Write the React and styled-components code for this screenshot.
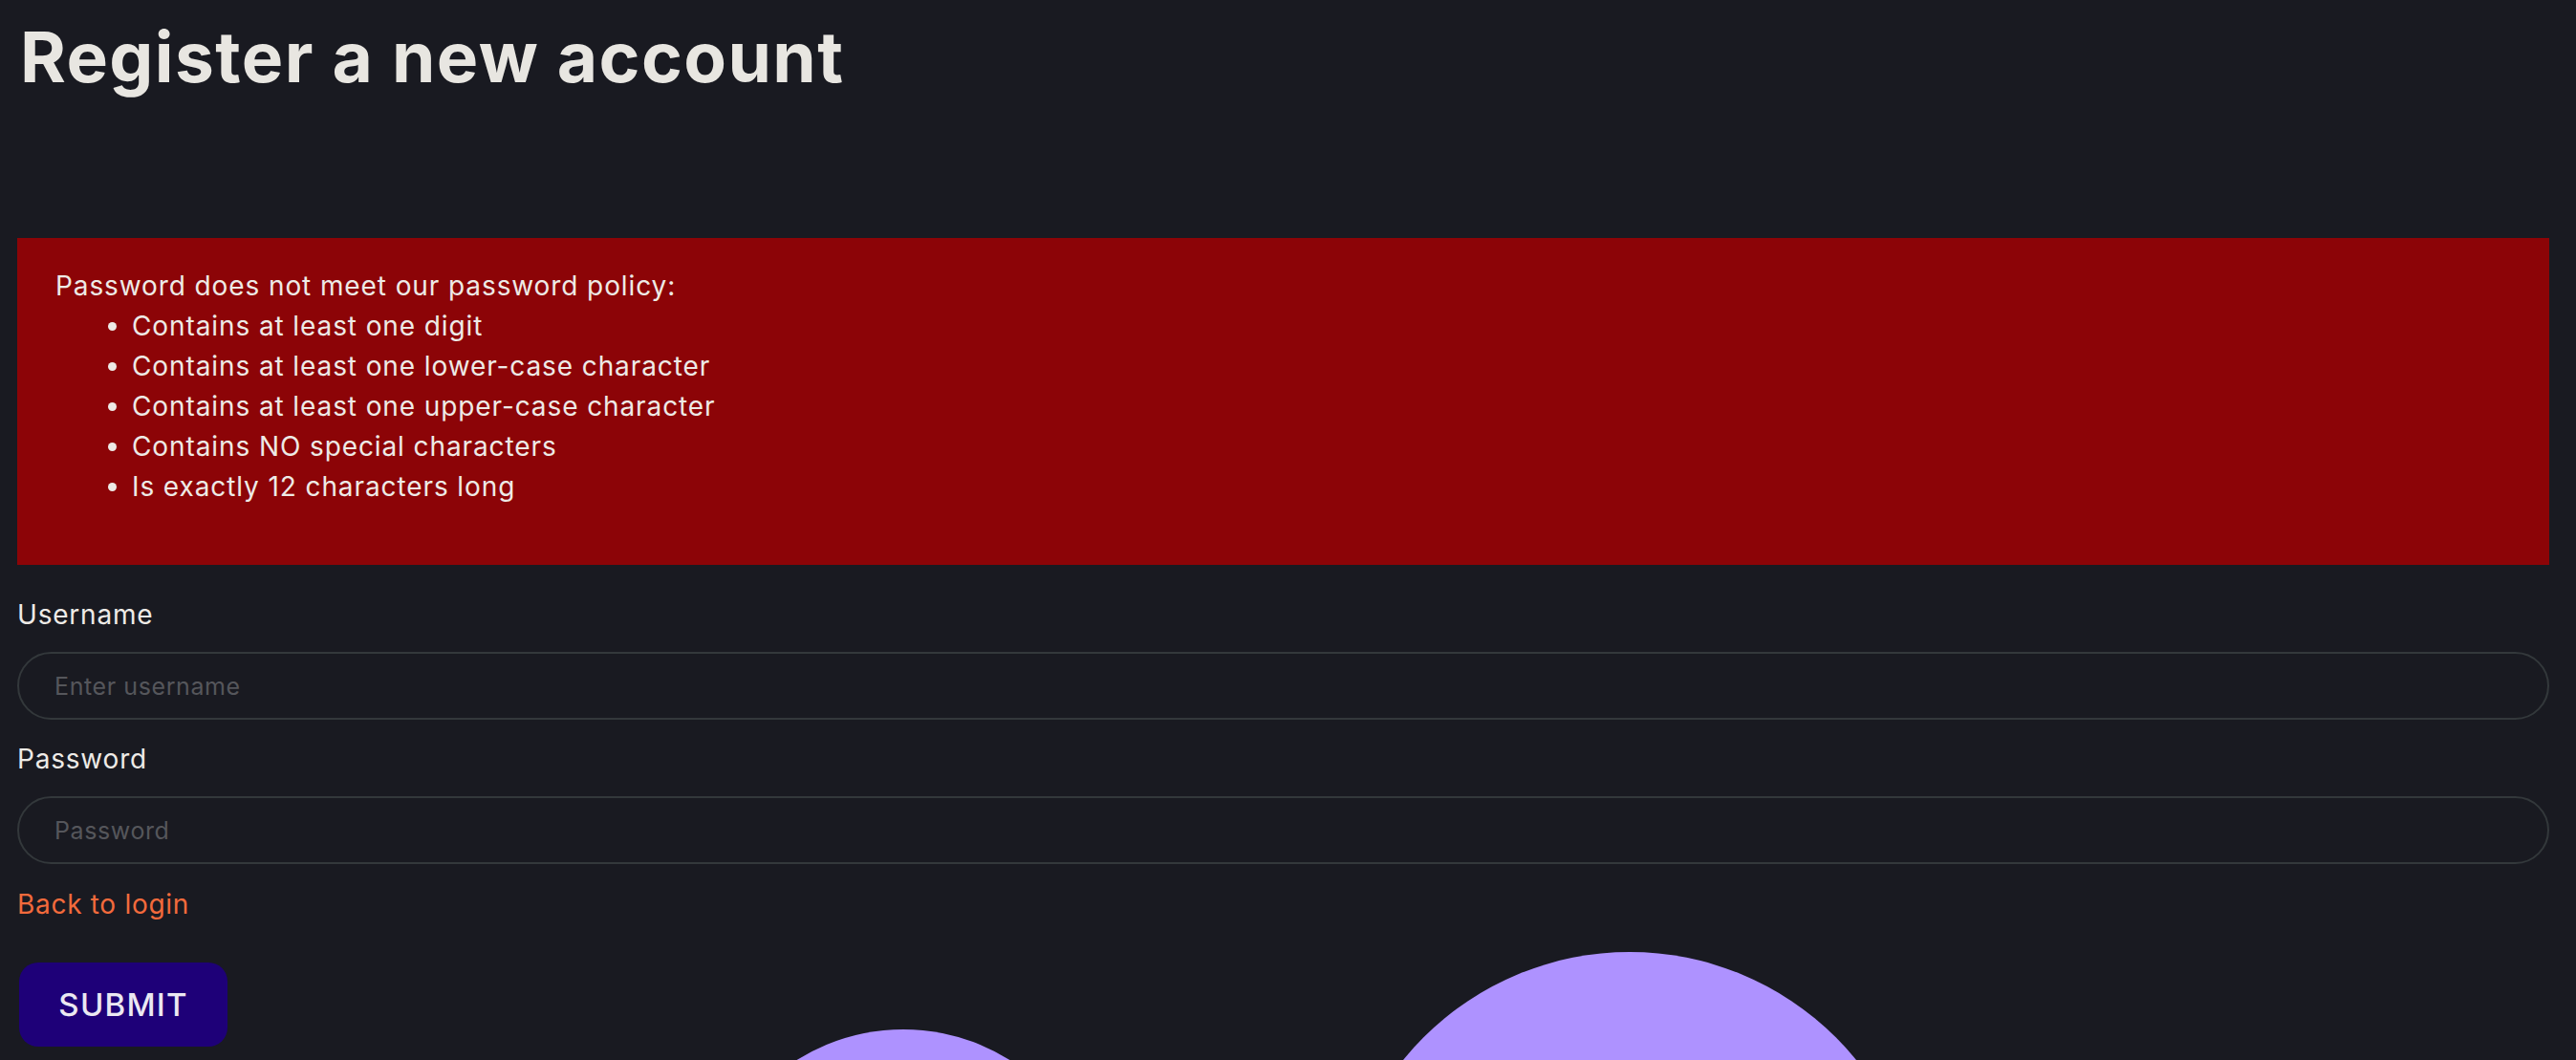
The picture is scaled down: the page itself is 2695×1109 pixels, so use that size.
import styled, { createGlobalStyle } from 'styled-components';

const GlobalStyle = createGlobalStyle`
  html, body {
    margin: 0;
    padding: 0;
    background: #191a21;
  }
  body {
    font-family: 'Inter', 'Noto Sans', sans-serif;
    color: #eeebe7;
    overflow: hidden;
  }
  * {
    box-sizing: border-box;
  }
`;

const Page = styled.div`
  position: relative;
  min-height: 1109px;
  overflow: hidden;
  padding: 0 28px 0 18px;
`;

const Content = styled.main`
  position: relative;
  z-index: 1;
  display: flex;
  flex-direction: column;
`;

const Title = styled.h1`
  margin: 16px 0 0 3px;
  height: 88px;
  font-size: 73px;
  line-height: 88px;
  font-weight: 700;
  letter-spacing: 1.4px;
  color: #e8e6e1;
`;

const Alert = styled.div`
  margin-top: 145px;
  background: #8c0407;
  padding: 29px 40px 61px;
  font-size: 28px;
  line-height: 42px;
  letter-spacing: 0.9px;
  color: #eeeae6;

  p {
    margin: 0;
  }
  ul {
    margin: 0;
    padding-left: 80px;
  }
`;

const Form = styled.form`
  display: flex;
  flex-direction: column;
  margin-top: 31px;
`;

const Label = styled.label`
  font-size: 28px;
  line-height: 42px;
  letter-spacing: 0.8px;
  color: #eeebe7;
  margin-top: ${(p) => p.$top || 0}px;
`;

const Input = styled.input`
  margin-top: 18px;
  height: 71px;
  width: 100%;
  border: 2px solid #33383b;
  border-radius: 36px;
  background: transparent;
  padding: 0 37px;
  font-family: 'Inter', 'Noto Sans', sans-serif;
  font-size: 25px;
  letter-spacing: 0.6px;
  color: #eeebe7;
  outline: none;

  &::placeholder {
    color: #55565b;
  }
`;

const BackLink = styled.a`
  margin-top: 21px;
  font-size: 28px;
  line-height: 42px;
  letter-spacing: 0.7px;
  color: #f26a3c;
  text-decoration: none;
  align-self: flex-start;
`;

const SubmitButton = styled.button`
  margin-top: 40px;
  margin-left: 2px;
  align-self: flex-start;
  width: 218px;
  height: 88px;
  border: none;
  border-radius: 20px;
  background: #1e0078;
  color: #ebe8f2;
  font-family: 'Inter', 'Noto Sans', sans-serif;
  font-size: 33px;
  font-weight: 500;
  letter-spacing: 1.2px;
  cursor: pointer;
`;

const Blob = styled.div`
  position: absolute;
  z-index: 0;
  border-radius: 50%;
  background: #ae92ff;
  width: ${(p) => p.$r * 2}px;
  height: ${(p) => p.$r * 2}px;
  left: ${(p) => p.$cx - p.$r}px;
  top: ${(p) => p.$top}px;
`;

const rules = [
  'Contains at least one digit',
  'Contains at least one lower-case character',
  'Contains at least one upper-case character',
  'Contains NO special characters',
  'Is exactly 12 characters long',
];

export default function App() {
  return (
    <Page>
      <GlobalStyle />
      <Blob $r={210} $cx={945} $top={1077} />
      <Blob $r={305} $cx={1705} $top={996} />
      <Content>
        <Title>Register a new account</Title>
        <Alert>
          <p>Password does not meet our password policy:</p>
          <ul>
            {rules.map((r) => (
              <li key={r}>{r}</li>
            ))}
          </ul>
        </Alert>
        <Form onSubmit={(e) => e.preventDefault()}>
          <Label htmlFor="username">Username</Label>
          <Input id="username" placeholder="Enter username" />
          <Label htmlFor="password" $top={20}>
            Password
          </Label>
          <Input id="password" type="password" placeholder="Password" />
          <BackLink href="#">Back to login</BackLink>
          <SubmitButton type="submit">SUBMIT</SubmitButton>
        </Form>
      </Content>
    </Page>
  );
}
